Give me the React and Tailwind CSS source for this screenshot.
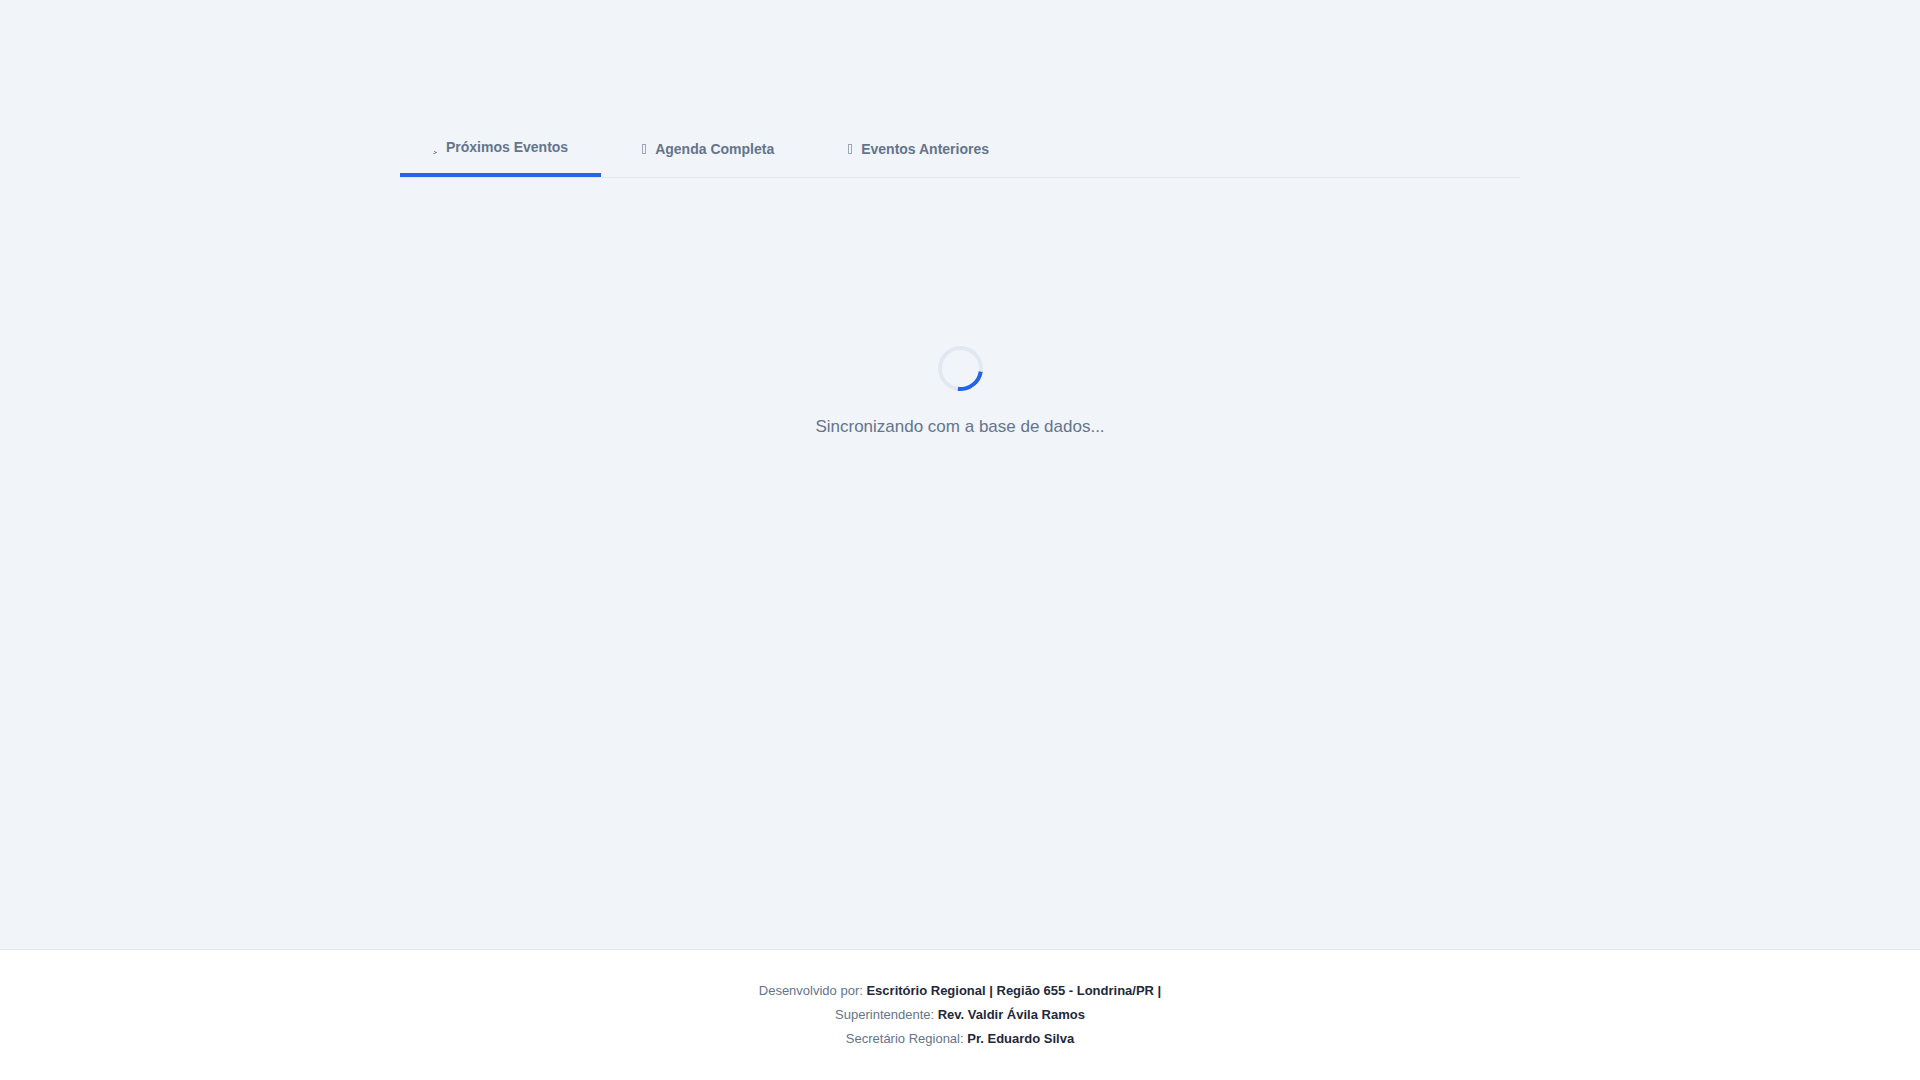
import { useState } from 'react';
import clsx from 'clsx';

const abas = [
  { id: 'proximos',   label: 'Próximos Eventos' },
  { id: 'agenda',     label: 'Agenda Completa' },
  { id: 'anteriores', label: 'Eventos Anteriores' },
];

const creditos = [
  { cargo: 'Desenvolvido por:',    nome: 'Escritório Regional | Região 655 - Londrina/PR |' },
  { cargo: 'Superintendente:',     nome: 'Rev. Valdir Ávila Ramos' },
  { cargo: 'Secretário Regional:', nome: 'Pr. Eduardo Silva' },
];

function IconeAba({ id }) {
  return (
    <svg width="5" height="16" viewBox="0 0 5 16" fill="none" className="shrink-0" aria-hidden="true">
      {id === 'proximos' ? (
        <path d="M1 12.5 H2.4 M2 13.5 H4 M0.4 14.5 H2.4" stroke="currentColor" strokeWidth="1" opacity="0.85" />
      ) : (
        <rect x="0.5" y="3.5" width="3" height="9" stroke="currentColor" strokeWidth="1" opacity="0.6" />
      )}
    </svg>
  );
}

export default function App() {
  const [abaAtiva, setAbaAtiva] = useState('proximos');

  return (
    <div className="min-h-screen flex flex-col bg-[#f1f5f9] text-[#64748b] font-['Liberation_Sans',Arial,sans-serif]">
      <header className="h-20" />

      <main className="flex-1 w-full max-w-[1200px] mx-auto px-10 pt-[41px]">
        {/* Abas */}
        <nav className="flex gap-2 border-b border-[#e2e8f0]">
          {abas.map(aba => (
            <button
              key={aba.id}
              type="button"
              onClick={() => setAbaAtiva(aba.id)}
              className={clsx(
                'flex items-center gap-2 px-[33px] border-b-4 text-[14px] leading-4 font-bold cursor-pointer',
                abaAtiva === aba.id
                  ? 'py-[18px] border-[#2563eb]'
                  : 'pt-5 pb-4 border-transparent'
              )}
            >
              <IconeAba id={aba.id} />
              {aba.label}
            </button>
          ))}
        </nav>

        {/* Carregando */}
        <div className="flex flex-col items-center gap-6 pt-[168px]" role="status">
          <div className="size-[45px] rounded-full border-4 border-[#e2e8f0] border-t-[#2563eb] rotate-[143deg]" />
          <p className="text-[17px] leading-6">Sincronizando com a base de dados...</p>
        </div>
      </main>

      <footer className="bg-white border-t border-[#e2e8f0] py-[29px] text-center text-[13px] leading-6">
        {creditos.map(c => (
          <p key={c.cargo}>
            {c.cargo} <strong className="text-[#1e293b]">{c.nome}</strong>
          </p>
        ))}
      </footer>
    </div>
  );
}
